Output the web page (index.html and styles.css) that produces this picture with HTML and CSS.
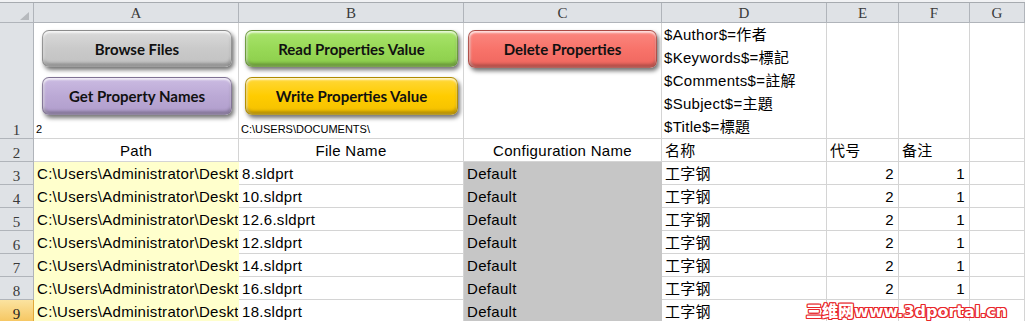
FILE: index.html
```html
<!DOCTYPE html>
<html lang="en">
<head>
    <meta charset="UTF-8">
    <title>Property Sheet</title>
    <link rel="stylesheet" href="styles.css">
</head>
<body>

<div class="sheet">
    <!-- column headers -->
    <div class="cell corner"><span class="tri"></span></div>
    <div class="cell hdr">A</div>
    <div class="cell hdr">B</div>
    <div class="cell hdr">C</div>
    <div class="cell hdr">D</div>
    <div class="cell hdr">E</div>
    <div class="cell hdr">F</div>
    <div class="cell hdr">G</div>

    <!-- row 1: macro buttons -->
    <div class="cell rh">1</div>
    <div class="cell stack">
        <button class="macro gray first" style="width:190px;margin-left:8px">Browse Files</button>
        <button class="macro purple" style="width:190px;margin-left:8px">Get Property Names</button>
        <span class="small">2</span>
    </div>
    <div class="cell stack">
        <button class="macro green first" style="width:213px;margin-left:6px">Read Properties Value</button>
        <button class="macro yellow" style="width:213px;margin-left:6px">Write Properties Value</button>
        <span class="small">C:\USERS\DOCUMENTS\</span>
    </div>
    <div class="cell stack">
        <button class="macro red first tall" style="width:189px;margin-left:4px">Delete Properties</button>
    </div>
    <div class="cell lines">
        <div>$Author$=作者</div>
        <div>$Keywords$=標記</div>
        <div>$Comments$=註解</div>
        <div>$Subject$=主題</div>
        <div>$Title$=標題</div>
    </div>
    <div class="cell"></div>
    <div class="cell"></div>
    <div class="cell"></div>

    <!-- row 2: titles -->
    <div class="cell rh">2</div>
    <div class="cell ctr">Path</div>
    <div class="cell ctr">File Name</div>
    <div class="cell ctr">Configuration Name</div>
    <div class="cell">名称</div>
    <div class="cell">代号</div>
    <div class="cell">备注</div>
    <div class="cell"></div>

    <div class="cell rh">3</div>
    <div class="cell path">C:\Users\Administrator\Desktop\</div>
    <div class="cell">8.sldprt</div>
    <div class="cell conf">Default</div>
    <div class="cell">工字钢</div>
    <div class="cell num">2</div>
    <div class="cell num">1</div>
    <div class="cell"></div>

    <div class="cell rh">4</div>
    <div class="cell path">C:\Users\Administrator\Desktop\</div>
    <div class="cell">10.sldprt</div>
    <div class="cell conf">Default</div>
    <div class="cell">工字钢</div>
    <div class="cell num">2</div>
    <div class="cell num">1</div>
    <div class="cell"></div>

    <div class="cell rh">5</div>
    <div class="cell path">C:\Users\Administrator\Desktop\</div>
    <div class="cell">12.6.sldprt</div>
    <div class="cell conf">Default</div>
    <div class="cell">工字钢</div>
    <div class="cell num">2</div>
    <div class="cell num">1</div>
    <div class="cell"></div>

    <div class="cell rh">6</div>
    <div class="cell path">C:\Users\Administrator\Desktop\</div>
    <div class="cell">12.sldprt</div>
    <div class="cell conf">Default</div>
    <div class="cell">工字钢</div>
    <div class="cell num">2</div>
    <div class="cell num">1</div>
    <div class="cell"></div>

    <div class="cell rh">7</div>
    <div class="cell path">C:\Users\Administrator\Desktop\</div>
    <div class="cell">14.sldprt</div>
    <div class="cell conf">Default</div>
    <div class="cell">工字钢</div>
    <div class="cell num">2</div>
    <div class="cell num">1</div>
    <div class="cell"></div>

    <div class="cell rh">8</div>
    <div class="cell path">C:\Users\Administrator\Desktop\</div>
    <div class="cell">16.sldprt</div>
    <div class="cell conf">Default</div>
    <div class="cell">工字钢</div>
    <div class="cell num">2</div>
    <div class="cell num">1</div>
    <div class="cell"></div>

    <div class="cell rh active">9</div>
    <div class="cell path">C:\Users\Administrator\Desktop\</div>
    <div class="cell">18.sldprt</div>
    <div class="cell conf">Default</div>
    <div class="cell">工字钢</div>
    <div class="cell num">2</div>
    <div class="cell num">1</div>
    <div class="cell"></div>
</div>

<div class="watermark"><span class="wm-cn">三维网</span>www.3dportal.cn</div>

</body>
</html>
```

FILE: styles.css
```css
body {
    margin: 0;
    padding-top: 2px;
    background-color: #f1f2f4;
    font-family: "Liberation Sans", Arial, "Noto Sans CJK SC", sans-serif;
    font-size: 15px;
    color: #000;
    position: relative;
    height: 321px;
    overflow: hidden;
}

.sheet {
    display: grid;
    grid-template-columns: 34px 205px 225px 198px 165px 72px 71px 1fr;
    grid-template-rows: 20px 116px repeat(8, 23px);
    border-top: 1px solid #a7abb0;
    background-color: white;
}

.cell {
    box-sizing: border-box;
    border-right: 1px solid #d4d4d4;
    border-bottom: 1px solid #d4d4d4;
    display: flex;
    align-items: flex-end;
    padding: 0 3px 1px 3px;
    line-height: 18px;
    letter-spacing: 0.3px;
    white-space: nowrap;
    overflow: hidden;
}

.hdr, .rh, .corner {
    background-color: #dfe2e6;
    border-color: #b0b4ba;
    font-family: "Liberation Serif", "Times New Roman", serif;
    color: #3a3a3a;
    letter-spacing: 0;
    justify-content: center;
}

.hdr {
    align-items: center;
    font-size: 15px;
    padding: 0;
}

.rh {
    font-size: 15px;
    line-height: 16px;
    padding: 0;
}

.rh.active {
    background: linear-gradient(#fbe3a0, #f6c660);
    border-color: #e0a83c;
    color: #222;
}

.corner {
    position: relative;
}

.tri {
    position: absolute;
    right: 4px;
    bottom: 2px;
    width: 0;
    height: 0;
    border-left: 9px solid transparent;
    border-bottom: 8px solid #b6b9bd;
}

.ctr {
    justify-content: center;
}

.num {
    justify-content: flex-end;
    padding-right: 4px;
}

.path {
    background-color: #ffffcc;
    border-color: #ffffcc;
    padding-left: 3px;
}

.conf {
    background-color: #c6c6c6;
    border-color: #c6c6c6;
}

/* row 1 */
.stack {
    flex-direction: column;
    align-items: flex-start;
    padding: 0;
}

.small {
    margin-top: auto;
    font-size: 11px;
    line-height: 13px;
    letter-spacing: 0;
    padding: 0 0 2px 2px;
}

.lines {
    flex-direction: column;
    align-items: flex-start;
    justify-content: flex-start;
    line-height: 23px;
    padding: 0 0 0 2px;
}

.macro {
    height: 38px;
    margin-top: 10px;
    border: 1px solid rgba(0, 0, 0, 0.28);
    border-radius: 7px;
    font-family: Lato, "Open Sans", sans-serif;
    font-weight: bold;
    font-size: 15px;
    letter-spacing: 0;
    color: #111;
    box-shadow: inset 0 2px 2px rgba(255, 255, 255, 0.7),
                inset 0 -3px 3px rgba(0, 0, 0, 0.25),
                inset 2px 0 2px rgba(255, 255, 255, 0.35),
                2px 3px 4px rgba(0, 0, 0, 0.55);
    flex-shrink: 0;
}

.macro.first {
    margin-top: 7px;
    height: 37px;
}

.macro.tall {
    height: 38px;
}

.gray { background: linear-gradient(#dadada, #cacaca 50%, #c2c2c2); }
.purple { background: linear-gradient(#cbbbe2, #bba9d5 50%, #b09dcc); }
.green { background: linear-gradient(#a9e46c, #98d957 50%, #8ccd4b); }
.yellow { background: linear-gradient(#ffd83a, #ffcc00 50%, #f3c000); }
.red { background: linear-gradient(#fb8880, #f8736a 50%, #ee665e); }

.watermark {
    position: absolute;
    left: 806px;
    top: 301px;
    font-family: "DejaVu Sans", "Noto Sans CJK SC", sans-serif;
    font-weight: bold;
    font-size: 16px;
    line-height: 18px;
    color: white;
    text-shadow: 1px 0 #e8262a, -1px 0 #e8262a, 0 1px #e8262a, 0 -1px #e8262a,
                 1px 1px #e8262a, -1px -1px #e8262a, 1px -1px #e8262a, -1px 1px #e8262a;
}

.wm-cn {
    font-family: "Noto Sans CJK SC", sans-serif;
    font-weight: 900;
}
```
